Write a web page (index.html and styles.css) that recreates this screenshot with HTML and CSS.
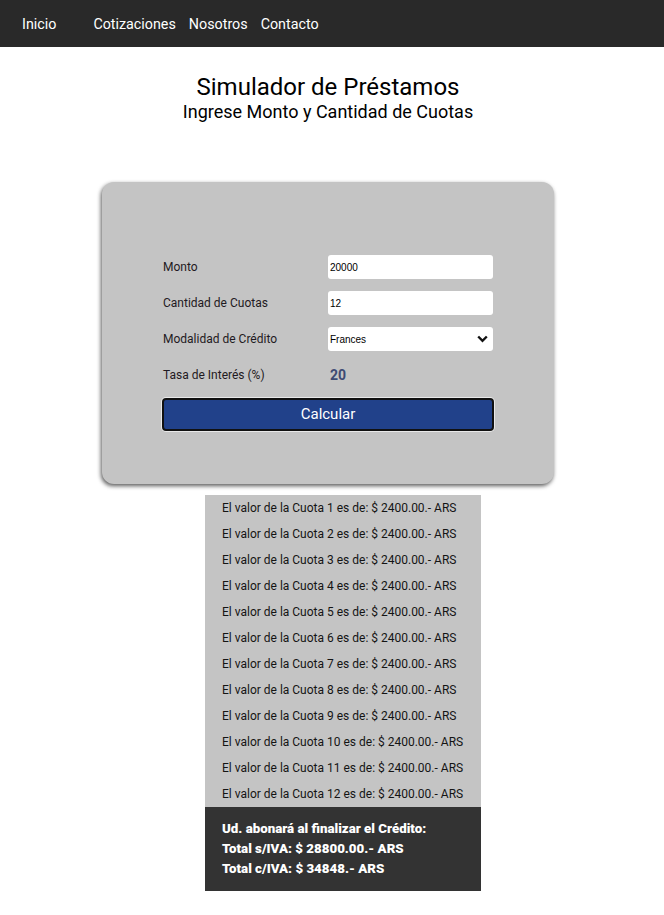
FILE: index.html
```html
<!DOCTYPE html>
<html lang="es">
<head>
<meta charset="utf-8">
<title>Simulador de Préstamos</title>
<link rel="stylesheet" href="styles.css">
</head>
<body>
<nav class="nav">
  <a class="nav-link nav-home" href="#">Inicio</a>
  <a class="nav-link" href="#">Cotizaciones</a>
  <a class="nav-link" href="#">Nosotros</a>
  <a class="nav-link" href="#">Contacto</a>
</nav>
<main class="main">
  <header class="heading">
    <h1 class="title">Simulador de Préstamos</h1>
    <h2 class="subtitle">Ingrese Monto y Cantidad de Cuotas</h2>
  </header>
  <section class="card">
    <form class="form">
      <label class="label" for="monto">Monto</label>
      <input class="field" id="monto" type="text" value="20000">
      <label class="label" for="cuotas">Cantidad de Cuotas</label>
      <input class="field" id="cuotas" type="text" value="12">
      <label class="label" for="modo">Modalidad de Crédito</label>
      <div class="select-wrap">
        <select class="field select" id="modo"><option>Frances</option></select>
        <svg class="chev" width="11" height="8" viewBox="0 0 11 8"><path d="M1.2 1.5 L5.5 5.8 L9.8 1.5" fill="none" stroke="#111" stroke-width="2.4"/></svg>
      </div>
      <span class="label">Tasa de Interés (%)</span>
      <span class="rate">20</span>
      <button class="btn" type="button">Calcular</button>
    </form>
  </section>
  <section class="results">
    <ul class="list">
      <li>El valor de la Cuota 1 es de: $ 2400.00.- ARS</li>
      <li>El valor de la Cuota 2 es de: $ 2400.00.- ARS</li>
      <li>El valor de la Cuota 3 es de: $ 2400.00.- ARS</li>
      <li>El valor de la Cuota 4 es de: $ 2400.00.- ARS</li>
      <li>El valor de la Cuota 5 es de: $ 2400.00.- ARS</li>
      <li>El valor de la Cuota 6 es de: $ 2400.00.- ARS</li>
      <li>El valor de la Cuota 7 es de: $ 2400.00.- ARS</li>
      <li>El valor de la Cuota 8 es de: $ 2400.00.- ARS</li>
      <li>El valor de la Cuota 9 es de: $ 2400.00.- ARS</li>
      <li>El valor de la Cuota 10 es de: $ 2400.00.- ARS</li>
      <li>El valor de la Cuota 11 es de: $ 2400.00.- ARS</li>
      <li>El valor de la Cuota 12 es de: $ 2400.00.- ARS</li>
    </ul>
    <div class="total">
      <p>Ud. abonará al finalizar el Crédito:</p>
      <p>Total s/IVA: $ 28800.00.- ARS</p>
      <p>Total c/IVA: $ 34848.- ARS</p>
    </div>
  </section>
</main>
</body>
</html>
```

FILE: styles.css
```css
* { box-sizing: border-box; }
html, body { margin: 0; padding: 0; }
body {
  font-family: Roboto, "Liberation Sans", sans-serif;
  background: #fff;
  color: #000;
}
.nav {
  height: 47px;
  background: #292929;
  display: flex;
  align-items: center;
  padding-left: 22px;
}
.nav-link {
  color: #fff;
  text-decoration: none;
  font-size: 14.3px;
  margin-right: 13px;
}
.nav-home { margin-right: 37px; }
.main {
  width: 656px;
  display: flex;
  flex-direction: column;
  align-items: center;
  padding-bottom: 24px;
}
.heading {
  text-align: center;
  margin-top: 26px;
}
.title {
  margin: 0;
  font-size: 24px;
  font-weight: 400;
  line-height: 28px;
}
.subtitle {
  margin: 0;
  font-size: 18px;
  font-weight: 400;
  line-height: 22px;
}
.card {
  margin-top: 59px;
  width: 452px;
  height: 302px;
  background: #c4c4c4;
  border-radius: 12px;
  box-shadow: -1px 2px 4px rgba(0,0,0,0.65);
  padding: 73px 0 0 61px;
}
.form {
  display: grid;
  grid-template-columns: 165px 165px;
  grid-auto-rows: 24px;
  row-gap: 12px;
  align-items: center;
}
.label {
  font-size: 12px;
  color: #1f1a22;
}
.field {
  width: 165px;
  height: 24px;
  border: none;
  border-radius: 3px;
  background: #fff;
  font-family: "Liberation Sans", Arial, sans-serif;
  font-size: 10px;
  padding: 0 2px;
  color: #000;
  outline: none;
}
.select-wrap { position: relative; height: 24px; }
.select {
  appearance: none;
  -webkit-appearance: none;
  padding-left: 2px;
}
.chev {
  position: absolute;
  right: 5px;
  top: 8px;
  pointer-events: none;
}
.rate {
  font-size: 14px;
  font-weight: 700;
  color: #3d4a73;
  padding-left: 2px;
}
.btn {
  grid-column: 1 / 3;
  width: 332px;
  height: 33px;
  margin-left: -1px;
  margin-top: 6px;
  background: #21418a;
  color: #fff;
  border: 2px solid #111;
  border-radius: 4px;
  font-family: Roboto, sans-serif;
  font-size: 15px;
  box-shadow: 0 0 0 1px #e9e9e9;
}
.results {
  margin-top: 11px;
  margin-left: 30px;
  width: 276px;
}
.list {
  list-style: none;
  margin: 0;
  padding: 0;
  background: #c4c4c4;
}
.list li {
  height: 26px;
  line-height: 26px;
  font-size: 12px;
  padding-left: 17px;
  color: #141414;
}
.total {
  background: #333;
  color: #fff;
  font-weight: 900;
  font-size: 13.3px;
  line-height: 20px;
  padding: 12px 17px 12px;
}
.total p { margin: 0; }
```
